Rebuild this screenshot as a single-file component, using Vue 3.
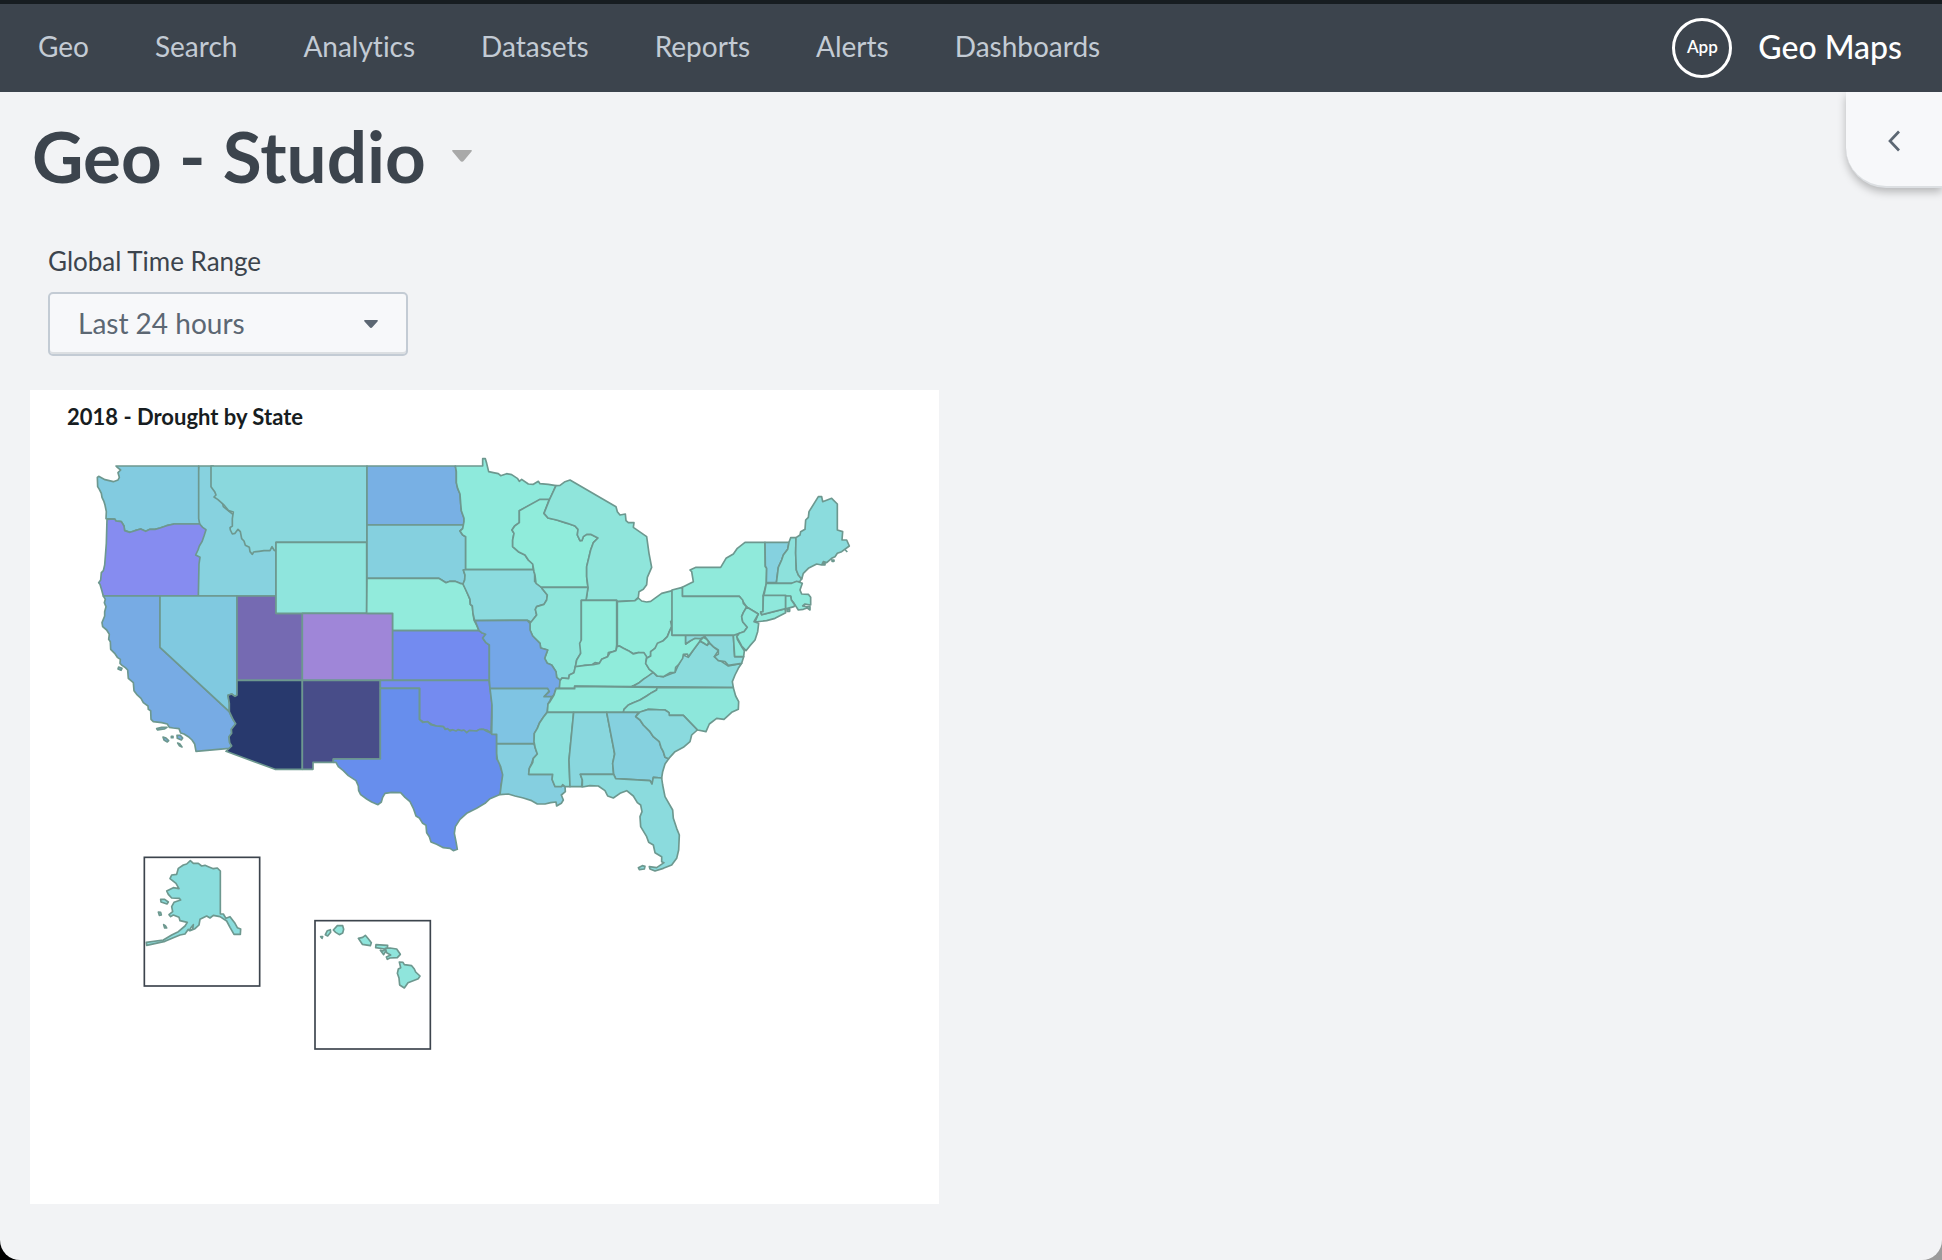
<script setup>
import { ref } from 'vue'

const links = ['Geo', 'Search', 'Analytics', 'Datasets', 'Reports', 'Alerts', 'Dashboards']
const range = ref('Last 24 hours')

// Each region has its own origin on the map; its states are listed from back to front.
const regions = [
  {
    id: 'west', x: 0, y: 0, states: [
      { id: 'Idaho', fill: '#87d2df', d: 'M356,78 H400 L430,200 480,240 500,300 588,310 V468 H340 V240Z' },
      { id: 'Montana', fill: '#8ad8dd', d: 'M393,78 H861 V307 H588 V334 L582,330 576,320 570,332 552,332 537,334 521,336 517,343 510,335 508,322 496,316 492,303 485,296 481,275 474,268 465,280 457,282 451,270 450,263 457,258 457,236 460,216 446,212 430,193 413,178 402,171 408,165 404,155 393,140Z' },
      { id: 'Washington', fill: '#82cbe0', d: 'M108,78 H356 V236 L359,252 H282 L260,257 240,264 225,268 210,268 197,274 182,267 165,272 150,277 134,272 132,258 124,245 108,243 104,237 78,236 79,215 75,195 72,185 66,172 64,160 58,148 53,140 52,112 56,109 75,119 100,125 114,120 118,112 114,98 122,90 112,82Z' },
      { id: 'Oregon', fill: '#868cf0', d: 'M81,238 L104,237 108,243 124,245 132,258 134,272 150,277 165,272 182,267 197,274 210,268 225,268 240,264 260,257 282,252 H359 L368,262 378,269 372,288 366,305 358,318 354,330 347,345 360,352 357,372 355,468 H70 L65,450 60,433 56,428 62,420 64,398 70,392 74,375 76,350 79,310Z' },
      { id: 'California', fill: '#77abe4', d: 'M70,468 H240 V622 L448,815 454,830 460,840 467,851 460,860 454,868 455,880 447,890 449,908 455,918 448,925 348,934 344,912 336,900 325,890 312,882 302,879 297,866 280,864 268,862 262,852 245,848 220,845 213,838 212,812 205,808 204,798 190,788 183,775 170,763 162,752 160,728 145,715 143,690 136,683 126,676 120,670 121,658 112,652 104,640 92,628 91,605 86,598 88,583 80,570 68,560 66,548 74,528 74,515 78,500 73,488 76,478Z M116,681 l10,4 -3,6 -9,-4Z M230,866 l15,-4 16,0 -8,5 -20,3Z M249,891 l9,3 8,8 -4,4 -10,-6Z M274,889 h5v4h-5Z M291,886 l10,0 7,8 -4,6 -12,-5Z M293,909 l6,2 7,10 -8,-4Z' },
      { id: 'Nevada', fill: '#80c9e0', d: 'M240,468 H471 V765 L465,769 455,762 444,766 448,790 448,815 240,622Z' },
      { id: 'Utah', fill: '#756ab2', d: 'M471,468 H588 V520 H667 V721 H471Z' },
      { id: 'Arizona', fill: '#28396d', d: 'M471,721 H667 V988 H585 L438,934 455,918 449,908 447,890 455,880 454,868 460,860 467,851 460,840 448,815 448,790 444,766 455,762 465,769 471,765Z' },
      { id: 'Wyoming', fill: '#8fe5dd', d: 'M588,307 H860 V520 H588Z' },
      { id: 'Colorado', fill: '#9f86d8', d: 'M667,520 H938 V721 H667Z' },
      { id: 'New Mexico', fill: '#484d89', d: 'M667,721 H901 V957 H760 V967 H699 V988 H667Z' },
    ],
  },
  {
    id: 'plains', x: 630, y: 0, states: [
      { id: 'North Dakota', fill: '#78b0e4', d: 'M231,78 H496 L499,95 499,128 503,145 510,162 512,190 514,212 522,235 521,255 H231Z' },
      { id: 'South Dakota', fill: '#85d0df', d: 'M231,255 H521 L518,266 510,273 518,285 527,290 V389 L520,390 525,405 524,420 519,432 510,430 495,424 480,424 468,428 455,420 446,415 H231Z' },
      { id: 'Nebraska', fill: '#92ebdc', d: 'M231,415 H446 L455,420 468,428 480,424 495,424 510,430 519,432 526,445 533,462 540,478 541,493 547,498 549,520 552,540 560,555 567,572 H308 V520 H230Z' },
      { id: 'Kansas', fill: '#738bf0', d: 'M308,572 H567 L575,578 588,583 578,594 588,608 598,615 V721 H308Z' },
      { id: 'Oklahoma', fill: '#748bf0', d: 'M271,721 H597 L600,745 606,790 605,820 603,878 590,870 575,868 555,874 540,875 530,878 520,872 505,875 498,877 485,870 470,870 460,860 440,858 425,853 413,846 400,846 389,838 V745 H271Z' },
    ],
  },
  {
    id: 'texas', x: 660, y: 660, states: [
      { id: 'Texas', fill: '#678eed', d: 'M241,85 H358 V178 L368,187 383,185 392,194 408,198 430,200 435,208 443,206 450,213 458,209 468,213 474,209 485,212 492,210 500,218 508,211 530,213 538,208 550,208 560,214 574,220 590,224 V297 L600,308 602,325 609,340 607,360 603,375 603,395 598,404 570,416 555,430 530,445 500,460 480,478 466,500 463,520 468,545 472,568 460,572 450,565 430,563 410,553 393,546 388,530 380,518 378,496 368,490 358,474 348,468 340,445 330,425 315,412 302,398 275,397 255,400 248,412 244,426 234,434 215,426 200,417 182,404 176,392 175,378 168,362 145,347 130,332 115,320 108,307 H100 V297 H241Z' },
    ],
  },
  {
    id: 'lakes', x: 1200, y: 0, states: [
      { id: 'Minnesota', fill: '#8eeadc', d: 'M-74,78 H8 V56 H16 L20,70 26,95 40,98 55,101 62,107 80,101 95,104 112,115 118,124 125,118 145,132 160,133 175,124 180,131 205,133 228,137 208,180 H180 L118,212 V248 L104,258 96,270 102,280 98,300 98,320 115,335 135,345 145,360 158,372 160,389 H-43 V290 L-52,285 -60,273 -52,266 -48,245 -48,235 -56,212 -58,190 -60,162 -67,145 -71,128 -71,95Z' },
      { id: 'Iowa', fill: '#8bdbde', d: 'M-43,389 H160 L164,400 164,425 180,435 188,448 202,465 200,480 192,493 170,500 166,508 170,525 160,538 155,547 142,541 -16,542 -21,520 -23,498 -29,493 -30,478 -37,462 -51,432 -46,420 -45,405 -50,390Z' },
      { id: 'Wisconsin', fill: '#90ecdb', d: 'M180,178 H208 L192,220 204,234 230,240 262,250 285,258 294,268 292,285 300,302 306,300 310,290 320,283 332,283 354,294 340,308 332,330 326,355 320,380 320,410 324,442 H184 L168,430 165,405 162,395 158,372 145,360 135,345 115,335 98,320 98,300 102,280 96,270 104,258 118,248 V212Z' },
      { id: 'Michigan', fill: '#8fe5db', d: 'M228,137 L240,136 255,125 270,120 408,200 412,215 420,225 436,222 438,242 445,248 462,248 460,262 500,290 507,340 515,382 502,412 500,434 490,448 477,455 475,472 465,482 412,485 410,481 H318 L324,442 320,410 320,380 326,355 332,330 340,308 354,294 332,283 320,283 310,290 306,302 300,302 292,285 294,268 285,258 262,250 230,240 204,234 192,220 208,180Z' },
      { id: 'Illinois', fill: '#8ee6db', d: 'M184,442 H324 L318,481 H304 V610 L302,640 290,660 286,680 282,698 268,705 266,716 246,714 240,722 230,712 228,695 215,675 202,670 194,655 203,630 182,624 180,610 158,588 150,570 150,550 158,540 170,525 166,508 170,500 192,493 200,480 202,465 188,448Z' },
      { id: 'Indiana', fill: '#90ecdb', d: 'M304,481 H410 V615 L408,632 398,635 385,638 383,650 365,658 358,670 345,668 335,675 315,676 300,680 286,682 290,660 302,640 299,610 304,600Z' },
      { id: 'Ohio', fill: '#90ecdb', d: 'M412,485 L465,482 475,474 485,483 500,486 512,484 545,460 577,452 V540 L572,545 575,560 568,575 562,590 550,602 540,608 525,625 512,635 512,648 500,655 492,640 475,638 460,641 445,632 430,625 418,618 412,620Z' },
    ],
  },
  {
    id: 'south', x: 1200, y: 600, states: [
      { id: 'Louisiana', fill: '#85cfe0', d: 'M50,311 H162 L166,325 172,342 160,355 155,370 148,385 146,403 H218 L217,418 225,438 H255 L256,455 244,465 250,480 244,490 230,498 228,486 212,488 195,492 172,492 155,482 130,474 105,468 85,462 60,464 63,440 68,405 62,380 52,358 50,340Z' },
      { id: 'Arkansas', fill: '#7fc4e3', d: 'M30,145 H203 L208,152 195,168 216,168 210,182 204,192 202,215 190,232 178,250 172,265 163,280 163,311 H50 V283 H35 L36,230 36,195Z' },
      { id: 'Missouri', fill: '#74a7e8', d: 'M-15,-58 L142,-59 150,-50 150,-30 158,-12 180,10 182,24 203,30 194,55 202,70 215,75 228,95 230,112 242,122 238,145 228,145 222,165 216,170 H192 L208,155 203,145 H30 L28,120 28,15 18,8 8,-6 17,-17 5,-22 -3,-28Z' },
      { id: 'Kentucky', fill: '#90ecdb', d: 'M238,145 H284 V138 L455,140 475,130 490,118 505,110 520,97 508,88 497,70 500,50 492,38 475,38 460,42 445,32 430,25 418,18 411,20 408,32 390,38 383,50 365,58 358,70 340,74 315,76 286,80 282,98 268,105 266,116 246,114 240,122Z' },
      { id: 'Virginia', fill: '#8bdcdd', d: 'M455,140 L475,130 490,118 520,97 530,108 550,110 585,97 595,75 610,45 625,52 640,30 660,3 680,15 690,10 702,22 715,32 703,50 725,65 745,78 785,70 775,85 765,105 757,125 760,143Z' },
      { id: 'Tennessee', fill: '#8feadb', d: 'M228,146 H284 V139 L531,142 530,150 515,158 500,168 480,180 460,188 445,195 432,208 430,217 H202 L204,192 210,185 222,165Z' },
      { id: 'Mississippi', fill: '#8be1dc', d: 'M202,217 H281 L267,360 270,440 H255 L248,434 244,440 H225 L216,418 218,403 H146 L148,385 158,368 160,355 172,342 166,325 162,305 163,280 172,265 178,250 190,232Z' },
      { id: 'Alabama', fill: '#89d7de', d: 'M281,217 H380 L398,310 404,342 398,370 401,403 H301 L307,420 305,440 H270 L267,360Z' },
      { id: 'North Carolina', fill: '#8de7db', d: 'M531,142 L760,143 767,168 776,185 775,208 755,217 732,238 710,235 688,252 678,275 653,270 610,226 H568 L567,218 555,210 505,208 480,217 H430 L432,208 445,195 460,188 480,180 500,168 515,158 530,150Z' },
      { id: 'Georgia', fill: '#85d1df', d: 'M380,217 H475 L467,230 480,240 490,255 510,275 520,290 538,305 543,322 550,335 555,352 566,356 555,372 548,395 545,414 520,412 516,432 510,422 407,416 401,403 398,370 404,342 398,310Z' },
      { id: 'South Carolina', fill: '#8adade', d: 'M467,230 L480,216 505,208 555,210 567,218 568,226 H610 L652,270 635,285 630,305 610,322 585,335 566,356 555,352 550,335 543,322 538,305 520,290 510,275 490,255 480,240Z' },
      { id: 'Florida', fill: '#8bdbdd', d: 'M301,403 H401 L407,416 510,422 516,432 520,412 545,414 548,435 555,470 578,510 580,535 590,565 598,585 596,630 590,655 575,675 550,685 525,693 510,687 508,680 530,683 552,668 545,665 545,650 525,638 520,615 506,607 500,590 482,560 480,530 486,515 482,495 472,488 460,468 440,452 420,460 400,474 383,468 375,452 355,438 330,437 307,441 307,420Z M475,683 l12,-6 8,2 -2,8 -15,2Z' },
    ],
  },
  {
    id: 'northeast', x: 1710, y: 120, states: [
      { id: 'West Virginia', fill: '#90ecdb', d: 'M66,420 V466 H107 V492 L120,483 133,475 155,472 150,483 130,510 115,530 112,522 100,523 98,535 85,555 77,562 75,577 60,578 40,590 22,588 10,577 -2,568 -13,550 -10,535 2,528 2,515 15,505 22,490 40,482 52,470 58,455 65,440Z' },
      { id: 'Maryland', fill: '#8bdbdd', d: 'M107,466 H250 L254,530 H281 L275,550 235,556 225,545 205,542 193,530 205,522 205,510 190,500 180,490 165,470 150,476 135,475 120,483 107,492Z' },
      { id: 'West Virginia panhandle', fill: '#90ecdb', d: 'M150,483 L160,472 170,478 176,486 172,496 160,488Z' },
      { id: 'Delaware', fill: '#8eeadc', d: 'M250,466 L262,462 262,478 275,500 283,512 281,530 H254Z' },
      { id: 'New York', fill: '#90eadb', d: 'M97,349 V322 L130,305 125,275 120,270 138,262 H212 L228,235 250,222 262,205 285,187 H345 L346,260 350,265 349,310 340,345 339,395 332,396 335,404 405,386 407,398 375,415 350,422 315,426 325,402 290,381 268,349Z' },
      { id: 'Pennsylvania', fill: '#8feadb', d: 'M66,330 L97,322 V349 H268 L278,360 280,370 290,381 280,398 275,410 278,425 292,442 282,455 268,460 253,465 H66Z' },
      { id: 'New Jersey', fill: '#8eeadc', d: 'M290,381 L325,402 312,425 326,430 323,455 315,480 300,497 288,512 275,498 260,470 268,460 282,455 292,442 278,425 275,410 280,398Z' },
      { id: 'Vermont', fill: '#85d1df', d: 'M345,187 H417 L413,208 400,225 395,240 385,262 379,308 H349 L350,265 346,258Z' },
      { id: 'New Hampshire', fill: '#8de1dc', d: 'M417,187 L422,173 438,173 437,220 439,270 445,285 455,295 450,304 425,310 H379 L385,262 395,240 400,225 413,208Z' },
      { id: 'Maine', fill: '#8bdcdd', d: 'M438,173 L450,165 452,155 465,148 467,120 475,112 477,95 505,50 515,50 518,65 545,55 562,72 V150 L578,155 576,180 590,180 598,198 575,215 562,220 555,230 545,235 530,248 520,245 515,255 500,252 475,265 460,280 455,298 445,285 439,270 437,220Z M546,240 h6 v4 h-6Z M517,250 h8 v5 h-8Z M586,210 l6,6' },
      { id: 'Massachusetts', fill: '#8feadb', d: 'M349,310 H425 L440,304 457,310 450,330 455,342 475,343 482,352 482,375 465,372 458,378 470,380 480,380 480,390 472,384 460,388 445,390 432,370 424,360 422,349 H340 L343,340Z' },
      { id: 'Connecticut', fill: '#8fe8dc', d: 'M340,346 H407 V386 L335,404 332,396 339,395Z' },
      { id: 'Rhode Island', fill: '#8eeadc', d: 'M407,348 H422 L424,360 434,374 432,380 410,386 407,386Z M411,388 h8 v6 h-8Z' },
    ],
  },
  {
    id: 'insets', x: 150, y: 1200, states: [
      { id: 'Alaska', fill: '#8adddd', d: 'M181,62 L190,70 205,70 215,78 225,76 235,80 250,86 262,84 271,93 V222 L280,222 288,235 300,230 315,250 322,263 332,267 331,283 H312 L300,262 290,243 270,230 250,226 240,234 230,228 210,238 207,255 195,266 180,272 175,268 165,282 150,285 130,293 105,304 50,316 49,307 100,300 125,285 145,275 165,258 172,247 150,242 147,232 130,225 122,230 117,224 128,215 125,200 132,187 152,180 148,175 125,174 115,163 110,153 130,143 147,146 138,130 120,116 125,105 140,103 145,85 160,75 170,72Z M92,178 l12,0 11,8 -4,6 -18,-6Z M85,216 l7,1 2,8 -6,1Z M101,254 l5,3 4,7 -6,0Z M190,254 l-8,10 -4,8 10,-4Z' },
      { id: 'Hawaii', fill: '#8fe5dc', d: 'M572,290 h6 l-2,5Z M601,269 L602,277 593,288 586,284 592,272Z M622,257 L638,257 641,268 638,279 628,284 617,277 610,270Z M706,286 L716,298 724,308 721,317 697,313 685,295 698,292Z M738,314 L773,316 772,324 764,327 737,323Z M751,331 l8,2 4,-5 4,5 -6,11Z M766,325 L780,324 800,327 811,343 802,353 780,354 772,358 769,351 782,345 770,338Z M808,366 L819,367 823,374 845,377 853,387 857,396 870,408 865,416 834,428 823,444 809,435 807,414 802,400 805,387 812,383Z' },
    ],
  },
]
</script>

<template>
  <div class="page">
    <header class="topbar">
      <nav class="links" aria-label="Main">
        <a v-for="link in links" :key="link" href="#">{{ link }}</a>
      </nav>
      <a class="app" href="#">
        <span class="badge">App</span>
        <span class="app-name">Geo Maps</span>
      </a>
    </header>

    <main class="content">
      <button class="drawer" type="button" aria-label="Open panel">
        <svg width="12" height="22" viewBox="0 0 12 22"><path d="M11 1.500 2 11l9 9.500" fill="none" stroke="#5c6773" stroke-width="2.700" /></svg>
      </button>

      <div class="heading">
        <h1>Geo - Studio</h1>
        <button class="caret" type="button" aria-label="Dashboard menu">
          <svg width="20" height="12" viewBox="0 0 20 12"><path d="M1 0H19Q20.500 0 19.500 1.500L12 10.500Q10 13 8 10.500L.5 1.500Q-.5 0 1 0Z" fill="#a9a9a9" /></svg>
        </button>
      </div>

      <div class="field">
        <label for="range">Global Time Range</label>
        <div class="select">
          <select id="range" v-model="range">
            <option>Last 24 hours</option>
            <option>Last 7 days</option>
          </select>
          <svg class="arrow" width="14" height="8" viewBox="0 0 14 8"><path d="M1 0H13Q14.500 0 13.500 1.500L8.500 7Q7 8.800 5.500 7L.5 1.500Q-.5 0 1 0Z" fill="#5c6773" /></svg>
        </div>
      </div>

      <div class="grid">
        <section class="card">
          <h2>2018 - Drought by State</h2>
          <svg class="map" viewBox="-150 -6 2727 2298" role="img" aria-label="Drought by state">
            <g v-for="r in regions" :key="r.id" :transform="`translate(${r.x} ${r.y})`">
              <path v-for="s in r.states" :key="s.id" class="state" :d="s.d" :fill="s.fill" />
            </g>
            <rect class="inset" x="193" y="1252" width="346" height="386" />
            <rect class="inset" x="705" y="1442" width="346" height="385" />
          </svg>
        </section>
      </div>
    </main>
  </div>
</template>

<style>
body {
  margin: 0;
  background: linear-gradient(90deg, #000 50%, #9b9b9b 50%);
}
</style>

<style scoped>
.page {
  box-sizing: border-box;
  min-height: 100vh;
  background: #f2f3f5;
  border-radius: 0 0 20px 20px;
  font-family: Lato, "Liberation Sans", sans-serif;
  font-variant-ligatures: none;
  color: #3c444d;
}

a {
  color: inherit;
  text-decoration: none;
}

button {
  padding: 0;
  border: 0;
  background: none;
  cursor: pointer;
}

svg {
  display: block;
}

.topbar {
  box-sizing: border-box;
  display: flex;
  align-items: center;
  justify-content: space-between;
  height: 92px;
  padding: 0 40px 0 38px;
  border-top: 4px solid #171d21;
  background: #3c444d;
}

.links {
  display: flex;
  gap: 66px;
  padding-bottom: 4px;
  color: #c3cbd4;
  font-size: 28px;
  line-height: 36px;
}

.app {
  display: flex;
  align-items: center;
  gap: 26px;
  color: #fff;
}

.badge {
  box-sizing: border-box;
  width: 60px;
  height: 60px;
  border: 3px solid #fff;
  border-radius: 50%;
  font-size: 17px;
  font-weight: 600;
  line-height: 52px;
  text-align: center;
}

.app-name {
  padding-bottom: 2px;
  font-size: 32px;
  font-weight: 500;
  line-height: 36px;
}

.content {
  position: relative;
  padding: 24px 30px 56px;
}

.drawer {
  position: absolute;
  top: 0;
  right: 0;
  box-sizing: border-box;
  display: flex;
  align-items: center;
  width: 96px;
  height: 96px;
  padding: 4px 0 0 42px;
  border-bottom: 2px solid #dcdfe2;
  border-radius: 0 0 0 40px;
  background: #f7f8fa;
  box-shadow: 0 4px 8px rgba(0, 0, 0, 0.25);
  clip-path: inset(0 0 -20px -20px);
}

.heading {
  display: flex;
  align-items: center;
  gap: 26px;
}

h1 {
  margin: 0 0 0 2px;
  font-size: 71px;
  font-weight: 700;
  line-height: 80px;
}

.field {
  display: flex;
  flex-direction: column;
  gap: 15px;
  margin: 49px 18px 34px;
}

label {
  font-size: 26px;
  line-height: 32px;
}

.select {
  position: relative;
  width: 360px;
}

select {
  box-sizing: border-box;
  width: 100%;
  height: 64px;
  padding: 0 28px 2px;
  border: 2px solid #c3cbd4;
  border-radius: 5px;
  background: #f7f8fa;
  box-shadow: inset 0 -2px 0 #dcdfe2;
  color: #5c6773;
  font-family: inherit;
  font-size: 28px;
  appearance: none;
}

.arrow {
  position: absolute;
  top: 28px;
  right: 30px;
  pointer-events: none;
}

.grid {
  display: grid;
  grid-template-columns: 1fr 1fr;
  gap: 64px;
}

.card {
  background: #fff;
}

h2 {
  margin: 0;
  padding: 15px 37px 9px;
  color: #171d21;
  font-size: 22px;
  font-weight: 700;
  line-height: 24px;
}

.map {
  width: 100%;
}

.state {
  stroke: #6d988f;
  stroke-width: 5;
  stroke-linejoin: round;
}

.inset {
  fill: none;
  stroke: #3c444d;
  stroke-width: 5;
}
</style>
